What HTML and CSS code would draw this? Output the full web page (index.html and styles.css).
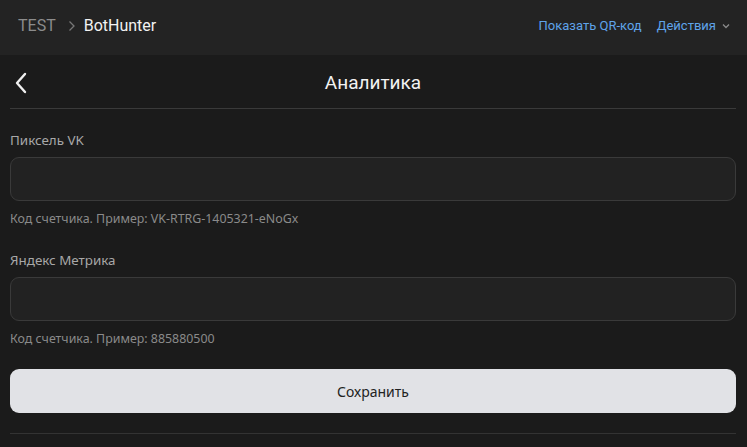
FILE: index.html
```html
<!DOCTYPE html>
<html>
  <head>
    <meta charset="UTF-8" />
    <title>Аналитика</title>
    <link rel="stylesheet" href="styles.css">
  </head>
  <body>
    <!-- top bar with breadcrumbs and actions -->
    <div class="topbar">
      <div class="crumbs">
        <span class="crumb-root">TEST</span>
        <svg class="crumb-sep" width="8" height="12" viewBox="0 0 8 12"><path d="M1.5 1.5 L6 6 L1.5 10.5" fill="none" stroke="#777" stroke-width="1.3"/></svg>
        <span class="crumb-current">BotHunter</span>
      </div>
      <div class="actions">
        <a class="link">Показать QR-код</a>
        <a class="link">Действия
          <svg class="caret" width="8" height="6" viewBox="0 0 8 6"><path d="M1 1.5 L4 4.5 L7 1.5" fill="none" stroke="#8a8a8a" stroke-width="1.3"/></svg>
        </a>
      </div>
    </div>

    <div class="page">
      <!-- page title -->
      <div class="title-row">
        <svg class="back" width="14" height="22" viewBox="0 0 14 22"><path d="M11 2 L3 11 L11 20" fill="none" stroke="#f0f0f0" stroke-width="2.4" stroke-linecap="round" stroke-linejoin="round"/></svg>
        <h1 class="title">Аналитика</h1>
      </div>

      <div class="form">
        <div class="field">
          <label class="label">Пиксель VK</label>
          <input class="input" />
          <div class="hint">Код счетчика. Пример: VK-RTRG-1405321-eNoGx</div>
        </div>
        <div class="field">
          <label class="label">Яндекс Метрика</label>
          <input class="input" />
          <div class="hint">Код счетчика. Пример: 885880500</div>
        </div>
        <button class="save">Сохранить</button>
      </div>
      <div class="bottom-line"></div>
    </div>
  </body>
</html>
```

FILE: styles.css
```css
body {
  margin: 0;
  background: #1b1b1b;
  font-family: "Noto Sans", "Open Sans", sans-serif;
  color: #e6e6e6;
  height: 447px;
  overflow: hidden;
}
/* top bar */
.topbar {
  height: 51px;
  padding: 0 18px 4px 18px;
  background: #232323;
  display: flex;
  align-items: center;
  justify-content: space-between;
  font-family: Roboto, "Liberation Sans", sans-serif;
}
.crumbs {
  display: flex;
  align-items: center;
  font-size: 16px;
}
.crumb-root {
  color: #8c8c8c;
}
.crumb-sep {
  margin: 0 8px 0 12px;
}
.crumb-current {
  color: #f2f2f2;
}
.actions {
  display: flex;
  align-items: center;
  gap: 15px;
  font-size: 13px;
  margin-right: -1px;
}
.link {
  color: #5fa3ea;
  display: flex;
  align-items: center;
}
.caret {
  margin-left: 6px;
}
/* page */
.page {
  padding: 0 11px 0 10px;
}
.title-row {
  height: 51px;
  padding-top: 2px;
  display: flex;
  align-items: center;
  justify-content: center;
  position: relative;
  border-bottom: 1px solid #3a3a3a;
}
.back {
  position: absolute;
  left: 4px;
  top: 17px;
}
.title {
  margin: 0;
  font-family: Roboto, "Liberation Sans", sans-serif;
  font-weight: 400;
  font-size: 19px;
  color: #f2f2f2;
}
.form {
  padding-top: 22px;
}
.field {
  display: flex;
  flex-direction: column;
  margin-bottom: 24px;
}
.field:last-of-type {
  margin-bottom: 22px;
}
.label {
  font-size: 13.4px;
  color: #a8a8a8;
  line-height: 18px;
  margin-bottom: 8px;
}
.input {
  height: 42px;
  background: #222222;
  border: 1px solid #3a3a3a;
  border-radius: 9px;
  margin: 0;
  padding: 0 12px;
  color: #eee;
}
.hint {
  font-size: 12.4px;
  color: #8a8a8a;
  line-height: 16px;
  margin-top: 10px;
}
.save {
  display: block;
  width: 100%;
  height: 44px;
  margin: 0;
  border: none;
  border-radius: 9px;
  background: #e1e2e6;
  color: #222;
  font-family: "Noto Sans", "Open Sans", sans-serif;
  font-size: 14px;
}
.bottom-line {
  margin-top: 20px;
  border-top: 1px solid #333;
}
```
